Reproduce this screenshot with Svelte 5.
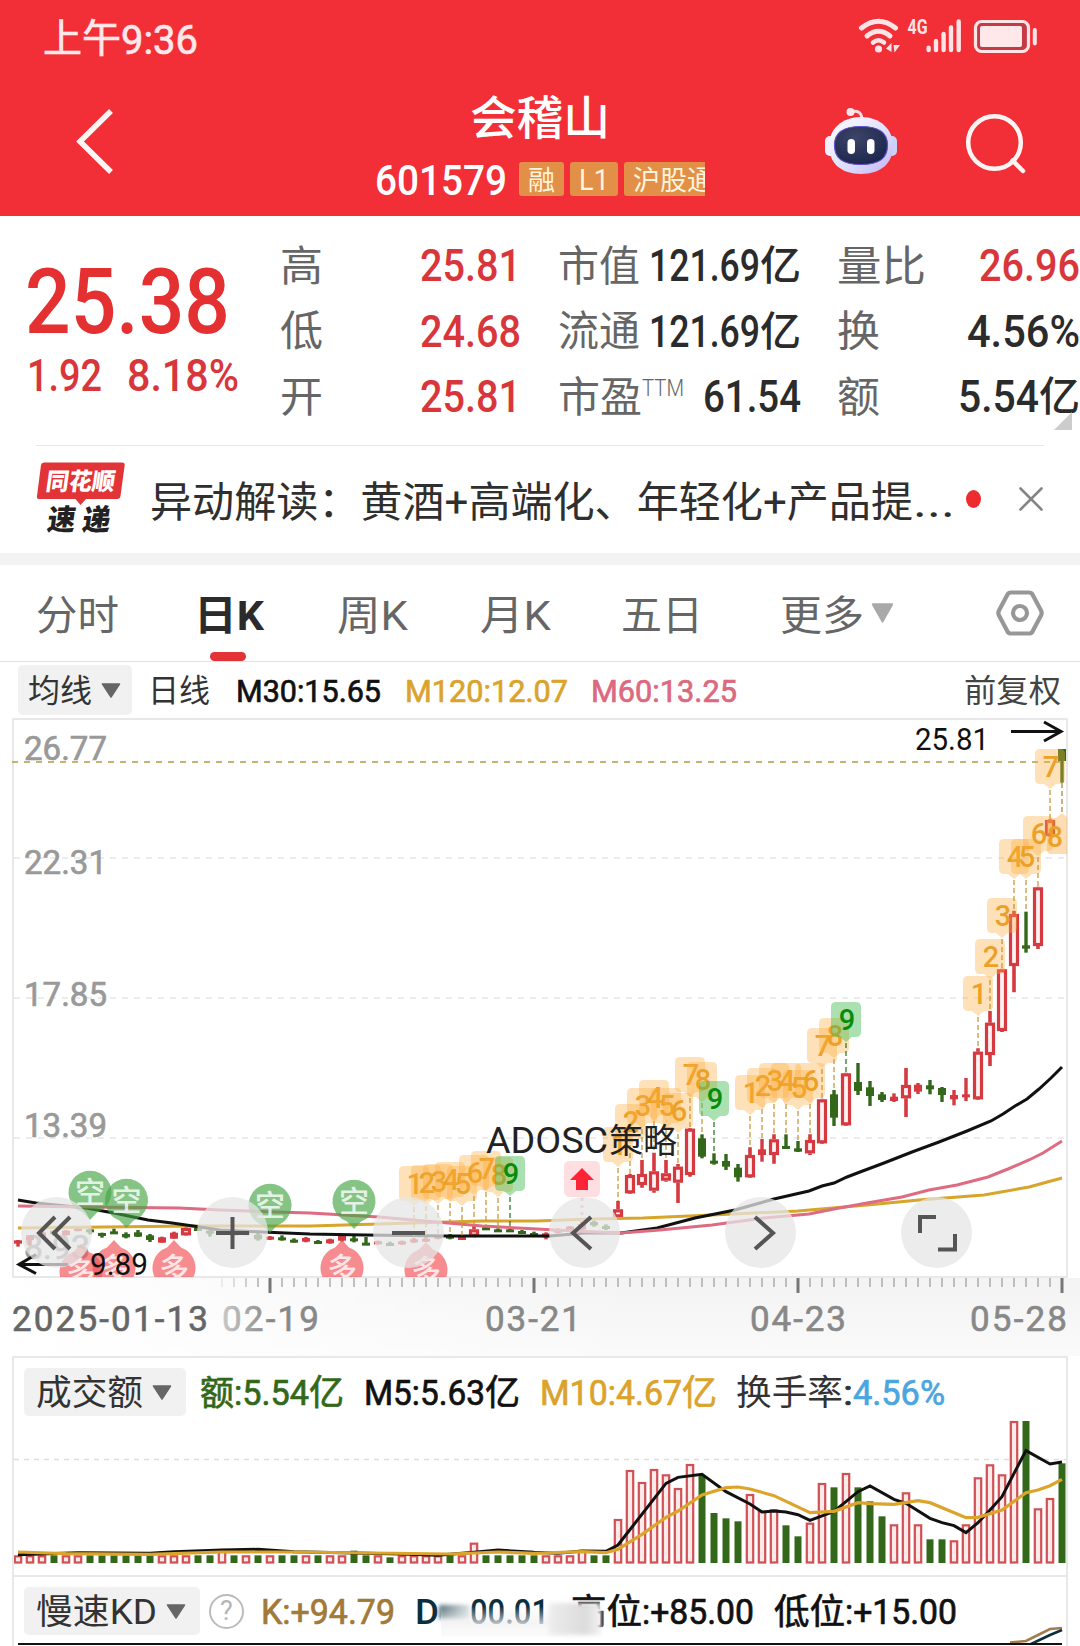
<script>
  const RED = '#d43a40';
  const GREEN = '#33681a';

  const quoteColumns = [
    [
      { label: '高', lw: 43, num: '25.81', nw: 101, red: true },
      { label: '低', lw: 43, num: '24.68', nw: 101, red: true },
      { label: '开', lw: 43, num: '25.81', nw: 101, red: true }
    ],
    [
      { label: '市值', lw: 82, num: '121.69', nw: 111, unit: '亿' },
      { label: '流通', lw: 82, num: '121.69', nw: 111, unit: '亿' },
      { label: '市盈', lw: 84, sup: 'TTM', num: '61.54', nw: 98 }
    ],
    [
      { label: '量比', lw: 89, num: '26.96', nw: 101, red: true },
      { label: '换', lw: 43, num: '4.56%', nw: 113 },
      { label: '额', lw: 43, num: '5.54', nw: 81, unit: '亿' }
    ]
  ];

  const barX = (i) => 18 + i * 12;
  const candleY = (v) => 1000 + v / 3;
  const volumeY = (v) => 1350 + v / 3;

  // [high, low, body top, body bottom, is up]
  const candles = [
    [720, 740, 721, 731, 1], [705, 735, 706, 720, 1], [695, 712, 697, 710, 1], [690, 708, 692, 703, 0],
    [690, 707, 692, 705, 1], [682, 694, 684, 692, 1], [682, 703, 688, 696, 0], [698, 713, 699, 705, 0],
    [686, 702, 694, 700, 0], [697, 715, 702, 712, 0], [690, 711, 697, 710, 0], [702, 726, 706, 720, 0],
    [710, 728, 712, 728, 1], [695, 716, 698, 716, 1], [682, 707, 684, 706, 1], [682, 693, 684, 690, 0],
    [690, 710, 692, 697, 0], [694, 704, 696, 703, 1], [695, 706, 697, 705, 0], [693, 706, 695, 704, 1],
    [699, 722, 704, 718, 0], [708, 720, 710, 716, 1], [706, 722, 712, 718, 0], [715, 728, 719, 723, 0],
    [711, 727, 714, 725, 1], [720, 731, 723, 728, 0], [716, 731, 718, 730, 1], [703, 725, 706, 722, 1],
    [707, 727, 715, 724, 0], [711, 733, 728, 733, 0], [722, 734, 724, 732, 1], [725, 736, 729, 732, 0],
    [722, 735, 724, 732, 1], [714, 729, 718, 727, 1], [711, 726, 716, 724, 1], [705, 718, 707, 714, 1],
    [702, 718, 707, 714, 0], [706, 720, 711, 717, 1], [678, 712, 688, 710, 1], [678, 688, 682, 686, 0],
    [685, 694, 688, 692, 0], [687, 693, 688, 692, 0], [690, 702, 693, 698, 0], [695, 709, 699, 705, 0],
    [697, 718, 700, 712, 1], [685, 700, 687, 698, 1], [678, 692, 680, 690, 1], [665, 690, 672, 688, 1],
    [662, 680, 666, 676, 0], [673, 690, 678, 686, 0], [603, 655, 628, 652, 1], [522, 582, 525, 580, 1],
    [480, 563, 522, 555, 1], [458, 578, 514, 572, 1], [480, 545, 520, 542, 1], [492, 609, 500, 548, 1],
    [384, 530, 386, 525, 1], [403, 475, 415, 470, 0], [460, 494, 482, 490, 0], [462, 510, 483, 500, 0],
    [492, 545, 503, 532, 0], [442, 534, 465, 532, 1], [417, 485, 448, 465, 1], [403, 491, 418, 465, 1],
    [403, 445, 438, 444, 0], [423, 456, 445, 455, 0], [403, 465, 420, 460, 1], [296, 432, 298, 430, 1],
    [270, 378, 283, 353, 0], [218, 378, 220, 376, 1], [189, 285, 246, 273, 0], [243, 318, 262, 288, 0],
    [276, 306, 283, 300, 0], [280, 306, 290, 303, 1], [204, 351, 255, 295, 1], [249, 282, 254, 275, 1],
    [240, 283, 256, 268, 0], [261, 306, 264, 285, 0], [270, 316, 285, 298, 1], [234, 303, 283, 290, 1],
    [145, 300, 155, 298, 1], [33, 198, 68, 165, 1], [-94, 96, -92, 93, 1], [-268, -23, -258, -102, 1],
    [-265, -142, -164, -154, 0], [-340, -153, -338, -162, 1], [-542, -490, -540, -492, 1], [-753, -652, -753, -717, 0]
  ];

  // top of each volume bar
  const volumes = candles.map(() => 616);
  volumes[17] = 597;
  volumes[28] = 602;
  volumes[31] = 622;
  volumes[38] = 578;
  volumes[47] = 600;
  volumes.splice(50, 38,
    507, 360, 396, 357, 373, 414, 342, 378, 489, 505, 514, 432, 483, 478, 526, 559, 518, 399, 412,
    369, 412, 454, 499, 523, 427, 523, 568, 568, 571, 523, 382, 343, 373, 213, 213, 475, 444, 340);

  const m30 = '18,1200 36,1203 86,1208 114,1213 148,1220 172,1223 193,1226 220,1230 262,1232 310,1234 365,1235 448,1236 510,1236 550,1236 585,1233 621,1233 657,1228 695,1218 735,1210 774,1199 809,1191 822,1186 834,1183 847,1177 860,1172 884,1163 912,1152 939,1142 967,1131 991,1121 1003,1114 1015,1106 1027,1099 1039,1089 1051,1078 1062,1067';
  const m60 = '18,1206 86,1207 179,1208 220,1210 275,1212 310,1213 379,1217 413,1220 448,1223 482,1226 537,1229 574,1231 621,1233 660,1230 712,1225 764,1218 809,1214 834,1209 867,1203 902,1197 929,1190 957,1185 988,1177 1008,1169 1029,1160 1043,1153 1062,1141';
  const m120 = '18,1228 103,1227 193,1226 310,1226 413,1223 482,1221 537,1221 592,1219 643,1218 712,1215 798,1211 867,1205 919,1200 984,1195 1029,1187 1062,1178';

  const volM5 = [[0, 614], [5, 608], [11, 610], [13, 605], [17, 600], [20, 598], [23, 605], [32, 612], [35, 616], [38, 607], [40, 600], [43, 607], [45, 610], [47, 603], [49, 604], [50, 585], [54, 400], [55, 382], [57, 373], [59, 425], [61, 462], [62, 486], [63, 483], [64, 486], [65, 494], [66, 511], [68, 484], [70, 425], [71, 408], [73, 448], [74, 460], [76, 505], [77, 518], [78, 527], [79, 548], [80, 518], [81, 480], [82, 440], [83, 370], [84, 302], [86, 342], [87, 336]];
  const volM10 = [[0, 606], [4, 611], [11, 613], [17, 606], [23, 606], [36, 612], [40, 606], [43, 610], [47, 605], [49, 608], [50, 598], [52, 553], [54, 502], [55, 483], [57, 435], [59, 413], [60, 411], [61, 417], [63, 437], [66, 488], [68, 484], [70, 458], [71, 461], [73, 463], [75, 452], [76, 458], [79, 503], [80, 502], [82, 480], [84, 428], [85, 420], [86, 407], [87, 388]];
  const toPoints = (line) => line.map(([i, v]) => `${barX(i)},${volumeY(v)}`).join(' ');

  // nine-turn sequences: first bar index and the top of each flag
  const sequences = [
    { start: 33, tops: [1166, 1165, 1164, 1162, 1166, 1155, 1151, 1157, 1156] },
    { start: 50, tops: [1127, 1104, 1088, 1080, 1088, 1093, 1057, 1062, 1081] },
    { start: 61, tops: [1075, 1068, 1063, 1063, 1070, 1063, 1028, 1018, 1002] },
    { start: 80, tops: [976, 939, 898, 839, 839, 816, 749] }
  ];
  const flags = sequences.flatMap(({ start, tops }) =>
    tops.map((top, k) => ({ n: k + 1, x: barX(start + k), top, to: candleY(candles[start + k][0]) }))
  );

  const shortPins = [[90, 1192], [126.5, 1200], [270, 1205], [354, 1201]];
  const longPins = [[81, 1272], [114, 1268], [174, 1268], [342, 1268], [426, 1270]];

  const priceLabels = [['26.77', 760], ['22.31', 874], ['17.85', 1006], ['13.39', 1137], ['8.93', 1259]];
  const dates = [['2025-01-13', 12, 196, '#666'], ['02-19', 222, 97, 'url(#fade)'], ['03-21', 485, 96, '#888'], ['04-23', 750, 96, '#888'], ['05-28', 970, 97, '#888']];
  const ticks = Array.from({ length: 71 }, (_, k) => k + 17);

  const tabs = [
    { name: '分时', w: 83, gap: 36 },
    { name: '日K', w: 70, gap: 75, active: true },
    { name: '周K', w: 71, gap: 73 },
    { name: '月K', w: 71, gap: 72 },
    { name: '五日', w: 82, gap: 70 },
    { name: '更多', w: 84, gap: 77 }
  ];

  const tools = [
    'M34 20 L18 36 L34 52 M49 20 L33 36 L49 52',
    'M19 36 H52 M35.5 20 V52',
    'M19 36 H52',
    'M42 20 L24 36 L42 52',
    'M30 20 L48 36 L30 52',
    'M19 36 V20 H35 M54 37 V52.500 H37'
  ];
</script>

{#snippet fit(text, w, size, cls = '')}
  <svg class="fit {cls}" width={w} height={size}>
    <text x="0" y={size * 0.87} font-size={size} textLength={w} lengthAdjust="spacingAndGlyphs">{text}</text>
  </svg>
{/snippet}

{#snippet caret(w, h, color)}
  <svg width={w} height={h} viewBox="0 0 20 15" preserveAspectRatio="none">
    <path d="M1.500 1 H18.500 L10 14 Z" fill={color} stroke={color} stroke-width="1.500" stroke-linejoin="round" />
  </svg>
{/snippet}

<div class="page">
  <header>
    <div class="status">
      <div class="clock">
        {@render fit('上午', 78, 39, 'firm')}
        {@render fit('9:36', 77, 41, 'firm')}
      </div>
      <svg width="188" height="40" viewBox="856 16 188 40" fill="none" stroke="#ffe4e6">
        <path d="M861.500 28 Q878.500 14.500 895.500 28" stroke-width="5" stroke-linecap="round" />
        <path d="M867 36 Q878.500 26.500 890 36" stroke-width="5" stroke-linecap="round" />
        <path d="M873 42.500 Q878.500 38 884 42.500" stroke-width="4.500" stroke-linecap="round" />
        <circle cx="878.500" cy="49" r="3.600" fill="#ffe4e6" stroke="none" />
        <path d="M886 48.500 L891.500 43 V52 Z M893.500 45 H900 L894.500 52.500 Z" fill="#ffe4e6" stroke="none" />
        <text x="907.500" y="34" font-size="20" font-weight="700" fill="#ffe4e6" stroke="none" textLength="20" lengthAdjust="spacingAndGlyphs">4G</text>
        <path d="M928.600 47.800 V50 M936 41 V50 M943.600 34 V50 M951 27.500 V50 M958.700 21.500 V50" stroke-width="4.400" stroke-linecap="round" />
        <rect x="975.500" y="21.500" width="53" height="30" rx="6" stroke-width="3.200" fill="#c43a45" />
        <rect x="980" y="26" width="42" height="21" rx="2" fill="#ffe8ea" stroke="none" />
        <path d="M1034.800 30 V43.500" stroke-width="4" stroke-linecap="round" />
      </svg>
    </div>

    <div class="nav">
      <svg class="back" width="44" height="72" viewBox="74 106 44 72" fill="none" stroke="#fff4f4" stroke-width="5.500">
        <path d="M111 111 L80 141.500 L111 172" />
      </svg>
      <div class="title">
        {@render fit('会稽山', 140, 46, 'medium')}
        <div class="codes">
          {@render fit('601579', 132, 42, 'medium')}
          <div class="tags">
            <span class="tag">{@render fit('融', 27, 27)}</span>
            <span class="tag l1">{@render fit('L1', 30, 30)}</span>
            <span class="tag cut">{@render fit('沪股通', 81, 27)}</span>
          </div>
        </div>
      </div>
      <svg class="robot" width="74" height="70" viewBox="824 106 74 70">
        <defs>
          <linearGradient id="shell" x1="0" y1="0" x2="1" y2="1">
            <stop offset="0" stop-color="#fff" />
            <stop offset=".55" stop-color="#dfe0fb" />
            <stop offset="1" stop-color="#c4b2f2" />
          </linearGradient>
          <radialGradient id="visor" cx=".4" cy=".3" r=".8">
            <stop offset="0" stop-color="#3d4468" />
            <stop offset="1" stop-color="#19234a" />
          </radialGradient>
        </defs>
        <path d="M851 112 Q861 109 862 119" fill="none" stroke="#fbd9e3" stroke-width="3" />
        <circle cx="850.500" cy="112" r="4" fill="#fde6ec" />
        <rect x="825" y="136" width="12" height="20" rx="5" fill="#f1efff" />
        <rect x="885" y="136" width="12" height="20" rx="5" fill="#c9d3fa" />
        <path d="M861 117 C880 117 893 129 893 146 C893 163 881 174 861 174 C841 174 829 163 829 146 C829 129 842 117 861 117 Z" fill="url(#shell)" />
        <path d="M861 126.500 C880 126.500 887.500 133 887.500 145 C887.500 158 880 164.500 861 164.500 C842 164.500 834.500 158 834.500 145 C834.500 133 842 126.500 861 126.500 Z" fill="url(#visor)" stroke="#5f51c8" stroke-width="1.200" />
        <rect x="847.500" y="139" width="7.500" height="15" rx="3.700" fill="#fff" />
        <rect x="867" y="139" width="7.500" height="15" rx="3.700" fill="#fff" />
      </svg>
      <svg class="search" width="64" height="64" viewBox="964 112 64 64" fill="none" stroke="#fff4f4" stroke-width="4.500">
        <circle cx="994.500" cy="142.500" r="26.300" />
        <path d="M1012.500 160.500 L1023 171" stroke-linecap="round" />
      </svg>
    </div>
  </header>

  <section class="quote">
    <div class="price">
      {@render fit('25.38', 205, 91, 'medium')}
      <div class="change">
        {@render fit('1.92', 75, 45, 'medium')}
        {@render fit('8.18%', 112, 45, 'medium')}
      </div>
    </div>
    {#each quoteColumns as column, c}
      <div class="stats">
        {#each column as item}
          <div class="stat">
            <div class="key">
              {@render fit(item.label, item.lw, 42)}
              {#if item.sup}
                <span class="sup">{@render fit(item.sup, 42, 24, 'light')}</span>
              {/if}
            </div>
            <div class="value" class:red={item.red} class:left={c === 0}>
              {@render fit(item.num, item.nw, 45, 'medium')}
              {#if item.unit}
                {@render fit(item.unit, 41, 41, 'medium')}
              {/if}
            </div>
          </div>
        {/each}
      </div>
    {/each}
    <i class="corner"></i>
  </section>

  <section class="news">
    <svg class="brand" width="90" height="76" viewBox="36 461 90 76">
      <path d="M44 463.500 H122 Q125 463.500 124.700 466 L120.500 497 Q120 500 117 500 H86 L80.500 506 L75.500 500 H39 Q36.500 500 37 497 L41 466 Q41.500 463.500 44 463.500 Z" fill="#e23336" />
      <text x="47" y="491" font-size="24" font-weight="900" fill="#fff" transform="skewX(-8) translate(67 0)" textLength="69" lengthAdjust="spacingAndGlyphs">同花顺</text>
      <text x="49" y="531" font-size="29" font-weight="900" fill="#222" transform="skewX(-8) translate(72 0)" textLength="28" lengthAdjust="spacingAndGlyphs">速</text>
      <text x="84" y="531" font-size="29" font-weight="900" fill="#222" transform="skewX(-8) translate(72 0)" textLength="28" lengthAdjust="spacingAndGlyphs">递</text>
    </svg>
    <div class="headline">
      {@render fit('异动解读：黄酒+高端化、年轻化+产品提', 763, 42)}
      {@render fit('...', 42, 42)}
    </div>
    <i class="dot"></i>
    <svg width="26" height="26" viewBox="0 0 26 26" stroke="#858585" stroke-width="2.600" stroke-linecap="round">
      <path d="M2.500 2.500 L23.500 23.500 M23.500 2.500 L2.500 23.500" />
    </svg>
  </section>

  <nav class="tabs">
    {#each tabs as tab}
      <div class="tab" class:active={tab.active} style:margin-left="{tab.gap}px">
        {@render fit(tab.name, tab.w, 41)}
      </div>
    {/each}
    <div class="more">{@render caret(23, 20, '#a9a9a9')}</div>
    <svg class="gear" width="50" height="48" viewBox="0 0 50 48" fill="none" stroke="#979797" stroke-width="4.200" stroke-linejoin="round">
      <path d="M16 3.500 H34 Q36.500 3.500 37.500 5.500 L46 21.500 Q47.300 24 46 26.500 L37.500 42.500 Q36.500 44.500 34 44.500 H16 Q13.500 44.500 12.500 42.500 L4 26.500 Q2.700 24 4 21.500 L12.500 5.500 Q13.500 3.500 16 3.500 Z" />
      <circle cx="25" cy="24" r="7" />
    </svg>
  </nav>

  <div class="averages">
    <div class="chip ma">
      {@render fit('均线', 64, 32)}
      {@render caret(20, 15, '#666')}
    </div>
    {@render fit('日线', 62, 32, 'dark')}
    {@render fit('M30:15.65', 145, 32, 'black firm')}
    {@render fit('M120:12.07', 163, 32, 'gold firm')}
    {@render fit('M60:13.25', 146, 32, 'pink firm')}
    <div class="adjust">{@render fit('前复权', 97, 32)}</div>
  </div>

  <div class="chart">
    <svg width="1080" height="560" viewBox="0 718 1080 560">
      <defs>
        <clipPath id="plot"><rect x="13" y="718" width="1054" height="559" /></clipPath>
      </defs>
      <rect x="13" y="719" width="1054" height="558" fill="none" stroke="#e8e8e8" stroke-width="2" />
      {#each [858, 998, 1138] as y}
        <path d="M14 {y} H1066" stroke="#e6e6e6" stroke-width="1.500" stroke-dasharray="6 6" />
      {/each}
      {#each priceLabels as [label, y]}
        <text class="firm" x="24" {y} font-size="34" fill="#999" color="#999" textLength={label.length > 4 ? 83 : 66} lengthAdjust="spacingAndGlyphs">{label}</text>
      {/each}
      <path d="M12 762 H1060" stroke="#b09c4a" stroke-width="1.600" stroke-dasharray="6 6" />

      <g clip-path="url(#plot)">
        {#each candles as [high, low, top, bottom, up], i}
          {@const x = barX(i)}
          {@const color = up ? RED : GREEN}
          {@const h = Math.max((bottom - top) / 3, 3)}
          {#if up && h > 7}
            <path d="M{x} {candleY(high)} V{candleY(top)} M{x} {candleY(bottom)} V{candleY(low)}" stroke={color} stroke-width="3.600" />
            <rect x={x - 3.500} y={candleY(top) + 1.500} width="7" height={h - 3} fill="#fff2f2" stroke={color} stroke-width="3.200" />
          {:else}
            <path d="M{x} {candleY(high)} V{candleY(low)}" stroke={color} stroke-width="3.400" />
            <rect x={x - 4} y={candleY(top)} width="8" height={h} fill={color} />
          {/if}
        {/each}

        <polyline points={m120} fill="none" stroke="#d6a52a" stroke-width="3" />
        <polyline points={m30} fill="none" stroke="#111" stroke-width="3" />
        <polyline points={m60} fill="none" stroke="#de6b81" stroke-width="3" />

        {#each shortPins as [x, y]}
          <g fill="#45a545" fill-opacity=".65">
            <path d="M{x - 7} {y + 20.500} A21.500 21.500 0 1 1 {x + 7} {y + 20.500} L{x} {y + 28} Z" />
            <text x={x - 15} y={y + 11} font-size="30" font-weight="500" fill="#fff" fill-opacity=".8">空</text>
          </g>
        {/each}
        {#each longPins as [x, y]}
          <g fill="#f2555b" fill-opacity=".68">
            <path d="M{x - 7} {y - 20.500} A21.500 21.500 0 1 0 {x + 7} {y - 20.500} L{x} {y - 28} Z" />
            <text x={x - 15} y={y + 11} font-size="30" font-weight="500" fill="#fff" fill-opacity=".8">多</text>
          </g>
        {/each}

        {#each flags as flag}
          {@const green = flag.n === 9}
          <path d="M{flag.x} {flag.top + 41} V{flag.to}" stroke={green ? '#2c7a2c' : '#c9973a'} stroke-width="1.300" stroke-dasharray="5 3" />
          <path
            d="M{flag.x - 10} {flag.top} h20 q5 0 5 5 v25 q0 5 -5 5 h-4 l-6 5 l-6 -5 h-4 q-5 0 -5 -5 v-25 q0 -5 5 -5 Z"
            fill={green ? '#45bb50' : '#fbab3c'}
            fill-opacity={green ? 0.45 : 0.36}
          />
          <text x={flag.x + 1} y={flag.top + 28} font-size="29" text-anchor="middle" font-weight="500" fill={green ? '#078c0c' : '#eba128'}>{flag.n}</text>
        {/each}
        <path d="M1062 783 V814" stroke="#a98a40" stroke-width="1.300" stroke-dasharray="5 3" />
        <path d="M1051 818 h5 l6 -5 l6 5 h5 v36 h-22 q-4 0 -4 -4 v-28 q0 -4 4 -4 Z" fill="#fbab3c" fill-opacity=".4" />
        <text x="1047" y="847" font-size="29" font-weight="500" fill="#eba128" textLength="16" lengthAdjust="spacingAndGlyphs">8</text>
      </g>

      <text x="915" y="750" font-size="31" fill="#111" textLength="74" lengthAdjust="spacingAndGlyphs">25.81</text>
      <path d="M1011 731.500 H1061 M1044 722 L1061 731.500 L1044 741" fill="none" stroke="#111" stroke-width="3" />
      <path d="M68 1264.500 H19 M36 1254.500 L19 1264.500 L36 1273.500" fill="none" stroke="#111" stroke-width="3" />
      <text x="90" y="1274.500" font-size="31" fill="#111" textLength="58" lengthAdjust="spacingAndGlyphs">9.89</text>

      <text x="486" y="1153" font-size="36" fill="#222" textLength="122" lengthAdjust="spacingAndGlyphs">ADOSC</text>
      <text x="609" y="1153" font-size="34" fill="#222">策略</text>
      <rect x="564" y="1161" width="36" height="36" rx="5" fill="#ffd3d8" fill-opacity=".75" />
      <path d="M582 1168 L594 1180 H588 V1190 H576 V1180 H570 Z" fill="#fd2437" />
      <path d="M582 1198 V1226" stroke="#f3a3b0" stroke-width="3" stroke-dasharray="3 4" />
    </svg>
    <div class="tools">
      {#each tools as d}
        <div class="tool">
          <svg width="71" height="71" viewBox="0 0 71 71" fill="none" stroke="#555" stroke-width="4"><path {d} /></svg>
        </div>
      {/each}
    </div>
  </div>

  <div class="axis">
    <svg width="1080" height="78" viewBox="0 1278 1080 78">
      <defs>
        <linearGradient id="fade">
          <stop offset="0" stop-color="#c8c8c8" />
          <stop offset=".5" stop-color="#888" />
        </linearGradient>
      </defs>
      {#each ticks as i}
        {#if (i - 21) % 22 === 0}
          <path d="M{barX(i)} 1278 V1293" stroke="#777" stroke-width="3" />
        {:else}
          <path d="M{barX(i)} 1278 V1287" stroke="#999" stroke-width="1.200" stroke-opacity={Math.min(1, (i - 16) / 4)} />
        {/if}
      {/each}
      {#each dates as [date, x, w, color]}
        <text {x} y="1331" font-size="35" fill={color} stroke={color} stroke-width=".6" textLength={w} lengthAdjust="spacing">{date}</text>
      {/each}
    </svg>
  </div>

  <section class="panel volume">
    <div class="legend">
      <div class="chip">
        {@render fit('成交额', 107, 35)}
        {@render caret(20, 15, '#666')}
      </div>
      <div class="pair green">{@render fit('额', 34, 34, 'firm')}{@render fit(':5.54', 75, 35, 'firm')}{@render fit('亿', 35, 35, 'firm')}</div>
      <div class="pair black">{@render fit('M5:5.63', 121, 35, 'firm')}{@render fit('亿', 35, 35, 'firm')}</div>
      <div class="pair gold">{@render fit('M10:4.67', 142, 35, 'firm')}{@render fit('亿', 35, 35, 'firm')}</div>
      <div class="pair dark">{@render fit('换手率', 107, 35)}{@render fit(':', 10, 35, 'firm')}<span class="blue">{@render fit('4.56%', 92, 35, 'firm')}</span></div>
    </div>
    <svg width="1052" height="156" viewBox="14 1416 1052 156">
      <path d="M14 1459.500 H1066" stroke="#ddd" stroke-width="1.500" stroke-dasharray="5 5" />
      {#each volumes as v, i}
        {@const up = candles[i][4]}
        {#if up}
          <rect x={barX(i) - 3.200} y={volumeY(v) + 1} width="6.400" height={1561.500 - volumeY(v)} fill="#ffeaea" stroke="#cf5055" stroke-width="2.200" />
        {:else}
          <rect x={barX(i) - 3.500} y={volumeY(v)} width="7" height={1563 - volumeY(v)} fill={GREEN} />
        {/if}
      {/each}
      <polyline points={toPoints(volM5)} fill="none" stroke="#111" stroke-width="3" />
      <polyline points={toPoints(volM10)} fill="none" stroke="#dca42b" stroke-width="3.200" />
    </svg>
  </section>

  <section class="panel kd">
    <div class="legend">
      <div class="chip">
        {@render fit('慢速KD', 121, 35)}
        {@render caret(20, 15, '#666')}
      </div>
      <div class="help">?</div>
      <div class="pair brown">{@render fit('K:+94.79', 134, 35, 'firm')}</div>
      <div class="pair navy">
        {@render fit('D', 24, 35, 'medium')}
        <span class="minus"></span>
        {@render fit('00.01', 79, 35, 'medium')}
        <i class="smear"></i>
      </div>
      <div class="pair black high">{@render fit('高位', 71, 35, 'firm')}{@render fit(':+85.00', 112, 35, 'firm')}<i class="smudge"></i></div>
      <div class="pair black">{@render fit('低位', 71, 35, 'firm')}{@render fit(':+15.00', 112, 35, 'firm')}</div>
    </div>
    <svg class="kd-lines" width="1052" height="20" viewBox="14 1626 1052 20" fill="none" stroke-width="2.600">
      <path d="M1010 1643.500 L1026 1642 L1038 1636 L1050 1630 L1062 1629" stroke="#a17c4e" />
      <path d="M1029 1646 L1050 1636 L1062 1631" stroke="#0b2f3d" />
      <path d="M18 1645 H1062" stroke="#111" stroke-width="2" />
    </svg>
  </section>
</div>

<style>
  :global(body) {
    background: #fff;
  }

  .page {
    width: 1080px;
    height: 1646px;
    overflow: hidden;
    background: #fff;
    font-family: Roboto, 'Noto Sans CJK SC', sans-serif;
    color: #333;
  }

  svg {
    display: block;
    flex: none;
  }

  .fit {
    overflow: visible;
    fill: currentColor;
  }

  /* between regular and medium */
  .firm {
    stroke: currentColor;
    stroke-width: 0.7px;
  }

  .medium { font-weight: 500; }
  .light { font-weight: 300; }
  .black { color: #111; }
  .dark { color: #333; }
  .gold { color: #dba32c; }
  .pink { color: #dc6980; }
  .green { color: #33681a; }
  .blue { color: #4ba5de; }
  .brown { color: #a17a38; }
  .navy { color: #0b2f3d; }

  header {
    height: 216px;
    background: #f22f37;
    color: #fff;
  }

  .status {
    display: flex;
    align-items: center;
    justify-content: space-between;
    height: 76px;
    padding: 0 36px 0 43px;
    color: #ffe8ea;
  }

  .status > svg {
    margin-top: -4px;
  }

  .clock {
    display: flex;
  }

  .nav {
    display: flex;
    align-items: flex-start;
    padding-left: 74px;
  }

  .back {
    margin-top: 30px;
  }

  .title {
    display: flex;
    flex-direction: column;
    align-items: center;
    width: 330px;
    margin: 18px 0 0 257px;
  }

  .codes {
    display: flex;
    align-items: center;
    justify-content: space-between;
    width: 100%;
    margin-top: 18px;
  }

  .tags {
    display: flex;
    gap: 6px;
    width: 186px;
    overflow: hidden;
  }

  .tag {
    display: flex;
    align-items: center;
    justify-content: center;
    flex: none;
    width: 45px;
    height: 34px;
    border-radius: 3px;
    background: #e28f47;
    color: #fff5dc;
  }

  .l1 {
    width: 48px;
  }

  .cut {
    width: 99px;
  }

  .robot {
    margin: 30px 0 0 119px;
  }

  .search {
    margin: 36px 0 0 66px;
  }

  .quote {
    position: relative;
    display: flex;
    height: 229px;
  }

  .price {
    width: 255px;
    padding: 38px 0 0 25px;
    color: #e53031;
  }

  .change {
    display: flex;
    gap: 25px;
    margin-top: 7px;
    padding-left: 2px;
    color: #d9363b;
  }

  .stats {
    width: 243px;
    margin-right: 36px;
    padding-top: 16px;
  }

  .stats:last-of-type {
    margin-right: 0;
  }

  .stat {
    display: flex;
    align-items: center;
    justify-content: space-between;
    height: 65.5px;
  }

  .key {
    display: flex;
    color: #666;
  }

  .value {
    display: flex;
    align-items: center;
    color: #2b2b2b;
  }

  .value.left {
    width: 102px;
  }

  .value.red {
    color: #d9363b;
  }

  .corner {
    position: absolute;
    right: 8px;
    bottom: 15px;
    border: 9px solid transparent;
    border-right-color: #ccc;
    border-bottom-color: #ccc;
  }

  .news {
    display: flex;
    align-items: center;
    height: 107px;
    margin: 0 36px;
    border-top: 1px solid #e8e8e8;
  }

  .headline {
    display: flex;
    margin: 2px 0 0 24px;
    color: #2f2f2f;
  }

  .brand {
    margin-top: -3px;
  }

  .dot {
    width: 18px;
    height: 18px;
    margin: -2px 37px 0 11px;
    border-radius: 50%;
    background: #ee2c30;
  }

  .news > svg:last-child {
    margin-top: -2px;
  }

  .tabs {
    display: flex;
    align-items: center;
    height: 96px;
    border-top: 12px solid #f3f3f3;
    border-bottom: 1px solid #e2e2e2;
    color: #666;
  }

  .tab {
    position: relative;
    margin-top: 3px;
  }

  .active {
    color: #2b2b2b;
    font-weight: 700;
  }

  .active::after {
    content: '';
    position: absolute;
    left: 16px;
    bottom: -26px;
    width: 36px;
    height: 9px;
    border-radius: 5px;
    background: #e23336;
  }

  .more {
    margin-left: 7px;
  }

  .gear {
    margin-left: auto;
    padding-right: 35px;
  }

  .averages {
    display: flex;
    align-items: center;
    height: 56px;
    padding: 0 19px 0 18px;
  }

  .chip {
    display: flex;
    align-items: center;
    gap: 9px;
    height: 48px;
    padding: 0 14px 0 12px;
    border-radius: 5px;
    background: #f1f1f1;
    color: #333;
  }

  .ma {
    height: 50px;
    padding: 0 11px 0 10px;
    margin-right: 16px;
  }

  .averages > .black { margin-left: 26px; }
  .averages > .gold { margin-left: 24px; }
  .averages > .pink { margin-left: 23px; }

  .adjust {
    margin-left: auto;
    color: #444;
  }

  .chart {
    position: relative;
  }

  .tools {
    position: absolute;
    left: 21px;
    right: 108px;
    top: 479px;
    display: flex;
    justify-content: space-between;
  }

  .tool {
    width: 71px;
    height: 71px;
    border-radius: 50%;
    background: rgba(230, 230, 230, 0.75);
  }

  .axis {
    background: linear-gradient(90deg, #fff, rgba(255, 255, 255, 0) 60%), linear-gradient(#f3f3f3, #fafafa);
  }

  .panel {
    margin: 0 12px;
    border: 2px solid #e8e8e8;
    border-bottom: 0;
    background: #fff;
  }

  .volume {
    height: 217px;
  }

  .kd {
    height: 70px;
    overflow: hidden;
  }

  .legend {
    display: flex;
    align-items: center;
    height: 48px;
    padding: 10px 0 0 10px;
  }

  .pair {
    position: relative;
    display: flex;
  }

  .volume .green { margin-left: 14px; }
  .volume .black { margin-left: 20px; }
  .volume .gold { margin-left: 20px; }
  .volume .dark { margin-left: 19px; }

  .help {
    width: 31px;
    height: 31px;
    margin: 0 17px 0 9px;
    border: 2.500px solid #bbb;
    border-radius: 50%;
    color: #b5b5b5;
    font-size: 27px;
    line-height: 31px;
    text-align: center;
  }

  .kd .navy {
    margin-left: 20px;
  }

  .minus {
    width: 31px;
    height: 14px;
    margin-top: 11px;
    background: linear-gradient(90deg, #55717b, #dfe4e6);
    filter: blur(2px);
  }

  /* washed-out strip over the figures */
  .smear {
    position: absolute;
    left: 26px;
    top: 0;
    width: 126px;
    height: 42px;
    background: linear-gradient(rgba(255, 255, 255, 0) 30%, rgba(240, 240, 240, 0.75) 70%, #fafafa 90%);
  }

  .kd .high {
    margin-left: 22px;
    margin-right: 20px;
  }

  .smudge {
    position: absolute;
    left: -22px;
    top: 9px;
    width: 52px;
    height: 32px;
    background: linear-gradient(90deg, #ededed, #dcdcdc 70%, #f2f2f2);
    filter: blur(2px);
  }

  .kd-lines {
    margin-top: -10px;
  }
</style>
